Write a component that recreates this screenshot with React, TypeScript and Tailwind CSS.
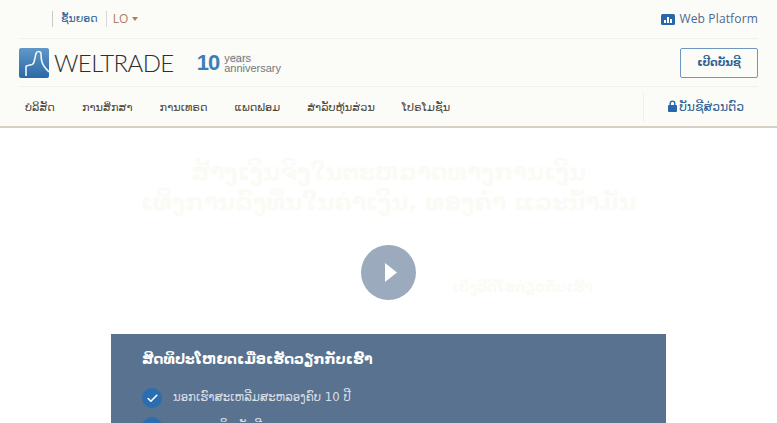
import { Check } from "lucide-react";

const LAO = "font-['DejaVu_Sans','Noto_Sans',sans-serif]";

const NAV = ["ບໍລິສັດ", "ການສຶກສາ", "ການເທຣດ", "ແພດຟອມ", "ສຳລັບຫຸ້ນສ່ວນ", "ໂປຣໂມຊັ່ນ"];

function Logo() {
  return (
    <div className="flex items-center">
      <svg width="30" height="30" viewBox="0 0 30 30">
        <defs>
          <linearGradient id="logoBg" x1="0" y1="0" x2="0" y2="1">
            <stop offset="0" stopColor="#6098c8" />
            <stop offset="1" stopColor="#2a68a8" />
          </linearGradient>
        </defs>
        <rect width="30" height="30" rx="2" fill="url(#logoBg)" />
        <path
          d="M7 28 V19 Q7 17.5 9 17.5 L13 16.5 Q14.5 16 15 14 L17 5.5 Q17.5 3.5 19.5 3.5 Q22 3.5 22 6 Q22 11 23 14 Q24 18 30 24"
          fill="none"
          stroke="#eef4f9"
          strokeWidth="1.6"
        />
      </svg>
      <span className="ml-[5px] font-['Lato',sans-serif] text-[24px] leading-none font-light tracking-[-0.6px] text-[#2e2e2e]">
        WELTRADE
      </span>
      <span className="ml-[23px] font-['Liberation_Sans',sans-serif] text-[22px] leading-none font-bold tracking-[-1px] text-[#3b7fba]">
        10
      </span>
      <span className="relative ml-[5px] flex flex-col font-['Liberation_Sans',sans-serif] text-[11px] leading-[10px] text-[#777777]">
        <span className="absolute top-[2px] left-[8px] h-[8px] w-[24px] bg-gradient-to-r from-[#e3edf6] to-[#fbfbf7]" />
        <span className="relative">years</span>
        <span className="relative">anniversary</span>
      </span>
    </div>
  );
}

function Perk({ text }: { text: string }) {
  return (
    <li className="flex h-[20px] items-center gap-[11px]">
      <span className="flex size-[20px] items-center justify-center rounded-full bg-[#2a6db0]">
        <Check className="size-[13px] text-white" strokeWidth={3} />
      </span>
      {text}
    </li>
  );
}

export default function App() {
  return (
    <div className={`h-[423px] w-[777px] overflow-hidden bg-white ${LAO}`}>
      <header className="h-[128px] border-b-2 border-[#d6d0c4] bg-[#fbfbf7] px-[19px]">
        <div className="flex h-[39px] items-center justify-between border-b border-[#f1f1ec]">
          <div className="flex items-center pl-[33px] text-[11px]">
            <span className="h-[16px] w-px bg-[#c9c9c2]" />
            <span className="ml-[8px] text-[#2f5f94]">ຊັ້ນຍອດ</span>
            <span className="ml-[8px] h-[16px] w-px bg-[#d8d8d0]" />
            <span className="ml-[6px] flex items-center font-['Open_Sans',sans-serif] text-[12px] text-[#a9805f]">
              LO
              <svg width="6" height="4" viewBox="0 0 6 4" className="ml-[4px]">
                <path d="M0 0H6L3 4Z" fill="#a9805f" />
              </svg>
            </span>
          </div>
          <div className="flex items-center font-['Open_Sans',sans-serif] text-[12px] tracking-[0.15px] text-[#4d6a91]">
            <svg width="14" height="11" viewBox="0 0 14 11" className="mr-[4px]">
              <rect width="14" height="11" rx="1.5" fill="#2a67a8" />
              <path d="M3 9V6h2v3zM6 9V3h2v6zM9 9V5h2v4z" fill="#fff" />
            </svg>
            Web Platform
          </div>
        </div>
        <div className="flex h-[48px] items-center justify-between border-b border-[#f1f1ec]">
          <Logo />
          <button className="flex h-[30px] w-[78px] items-center justify-center rounded-[2px] border border-[#6f96c0] text-[10.5px] font-bold text-[#2f5f94]">
            ເປີດບັນຊີ
          </button>
        </div>
        <div className="flex h-[39px] items-center justify-between">
          <nav className="flex gap-[27px] pt-[4px] pl-[6px] text-[11.3px] text-[#4a4538]">
            {NAV.map((it) => (
              <span key={it}>{it}</span>
            ))}
          </nav>
          <div className="flex h-[30px] items-center border-l border-[#f1f1ec] pt-[2px] pr-[14px] pl-[24px] text-[12.4px] text-[#2f5f94]">
            <svg width="9" height="12" viewBox="0 0 9 12" className="mr-[2px] mb-[3px]">
              <path d="M2.2 5V3.4a2.3 2.3 0 0 1 4.6 0V5" fill="none" stroke="#2a67a8" strokeWidth="1.4" />
              <rect y="5" width="9" height="7" rx="1" fill="#2a67a8" />
            </svg>
            ບັນຊີສ່ວນຕົວ
          </div>
        </div>
      </header>

      <main className="flex flex-col items-center">
        <h1 className="mt-[29px] text-center text-[23.3px] leading-[30px] font-bold text-[#fbfbf5]">
          ສ້າງເງິນຈິງໃນຕະຫລາດທາງການເງິນ
          <br />
          ເທິງການລົງທຶນໃນຄ່າເງິນ, ທອງຄຳ ແລະນ້ຳມັນ
        </h1>
        <div className="relative mt-[28px] flex h-[56px] w-full justify-center">
          <div className="flex size-[55px] items-center justify-center rounded-full bg-[#9caabd]">
            <svg width="12" height="19" viewBox="0 0 12 19" className="ml-[5px]">
              <path d="M0 0L12 9.5L0 19Z" fill="#fff" />
            </svg>
          </div>
          <span className="absolute top-[32px] left-[452px] text-[14px] font-bold text-[#fbfbf5]">
            ເບິ່ງວີດີໂອກ່ຽວກັບເຮົາ
          </span>
        </div>
        <section className="mt-[33px] h-[200px] w-[555px] bg-[#587290] px-[31px] pt-[12px]">
          <h2 className="text-[14px] leading-[26px] font-bold text-white">ສິດທິປະໂຫຍດເມື່ອເຮັດວຽກກັບເຮົາ</h2>
          <ul className="mt-[16px] space-y-[9px] text-[11.7px] text-[#d8dfe6]">
            <Perk text="ນອກເຮົາສະເຫລີມສະຫລອງຄົບ 10 ປີ" />
            <Perk text="ການຖອນເງິນ ທັນທີ" />
          </ul>
        </section>
      </main>
    </div>
  );
}
